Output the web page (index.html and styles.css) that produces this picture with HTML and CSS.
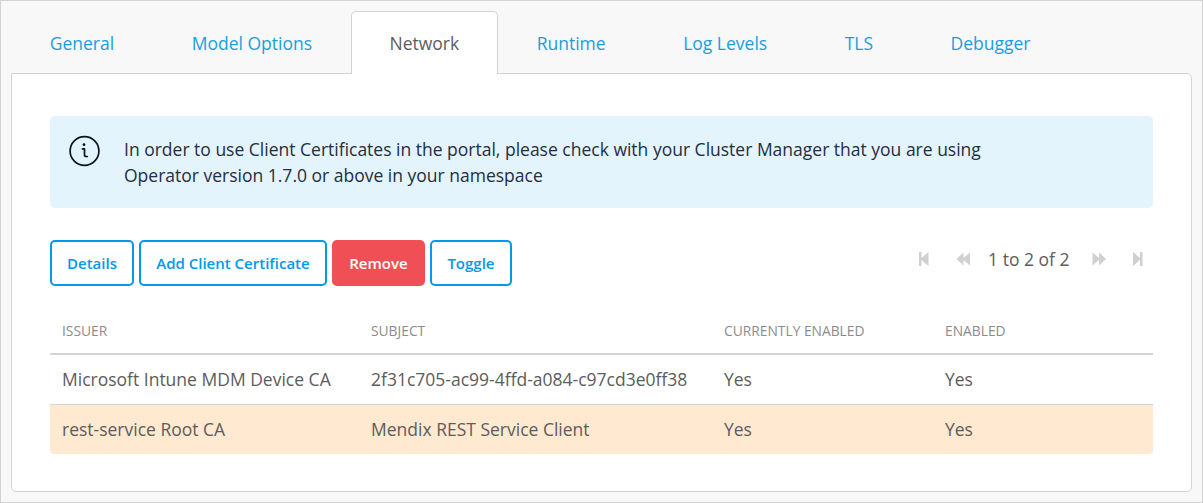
FILE: index.html
```html
<!DOCTYPE html>
<html lang="en">
<head>
<meta charset="utf-8">
<title>Environment Details - Network</title>
<link rel="stylesheet" href="styles.css">
</head>
<body>
<div class="page">
  <nav class="tabs">
    <a class="tab">General</a>
    <a class="tab">Model Options</a>
    <a class="tab active">Network</a>
    <a class="tab">Runtime</a>
    <a class="tab">Log Levels</a>
    <a class="tab">TLS</a>
    <a class="tab">Debugger</a>
  </nav>
  <main class="panel">
    <div class="notice">
      <svg class="info" viewBox="0 0 32 32" fill="none" stroke="#0a1326" stroke-width="1.7" stroke-linecap="round" stroke-linejoin="round">
        <circle cx="16.500" cy="16" r="14.400"/>
        <path d="M14.500 13.900h2v5.800q0 1.800 1.700 1.800h1.100"/>
        <circle cx="16" cy="9.700" r="1.400" fill="#0a1326" stroke="none"/>
      </svg>
      <p class="message">In order to use Client Certificates in the portal, please check with your Cluster Manager that you are using<br>Operator version 1.7.0 or above in your namespace</p>
    </div>
    <div class="toolbar">
      <div class="buttons">
        <button class="btn">Details</button>
        <button class="btn wide">Add Client Certificate</button>
        <button class="btn danger">Remove</button>
        <button class="btn toggle">Toggle</button>
      </div>
      <div class="pager">
        <svg class="step first" viewBox="0 0 10 14"><path d="M0 0h2.500v6l7-6v14l-7-6v6H0z"/></svg>
        <svg class="jump prev" viewBox="0 0 14 14"><path d="M.5 7l7-6.500V6L14 .5v13L7.500 8v5.500z"/></svg>
        <span class="count">1 to 2 of 2</span>
        <svg class="jump next" viewBox="0 0 14 14"><path d="M14 7L7 .5V6L.5 .5v13L7 8v5.500z"/></svg>
        <svg class="step last" viewBox="0 0 10 14"><path d="M9.500 0H7v6L0 0v14l7-6v6h2.500z"/></svg>
      </div>
    </div>
    <table class="grid">
      <colgroup><col class="c1"><col class="c2"><col class="c3"><col class="c4"></colgroup>
      <thead><tr><th>ISSUER</th><th>SUBJECT</th><th>CURRENTLY ENABLED</th><th>ENABLED</th></tr></thead>
      <tbody>
        <tr><td>Microsoft Intune MDM Device CA</td><td>2f31c705-ac99-4ffd-a084-c97cd3e0ff38</td><td>Yes</td><td>Yes</td></tr>
        <tr class="selected"><td>rest-service Root CA</td><td>Mendix REST Service Client</td><td>Yes</td><td>Yes</td></tr>
      </tbody>
    </table>
  </main>
</div>
</body>
</html>
```
FILE: styles.css
```css
* { box-sizing: border-box; }
body { margin: 0; font-family: "Open Sans", sans-serif; font-size: 17.5px; color: #5c5c5c; }
.page { width: 1203px; height: 503px; padding: 10px; border: 1px solid #d3d3d3; background: #f8f8f8; display: flex; flex-direction: column; }
.tabs { display: flex; height: 63px; margin-bottom: -1px; flex: none; position: relative; }
.tab { height: 63px; padding: 0 37.750px; border: 1px solid transparent; border-bottom: 0; line-height: 62px; color: #1a9edf; white-space: nowrap; }
.tab.active { background: #fff; border-color: #d3d3d3; border-radius: 5px 5px 0 0; color: #5c5c5c; }
.panel { height: 419px; width: 1181px; padding: 42px 38px 0; background: #fff; border: 1px solid #d3d3d3; border-radius: 0 5px 5px 5px; }
.notice { display: flex; height: 92px; padding: 19px 18px; gap: 24px; background: #e3f4fd; border-radius: 5px; color: #252e40; }
.info { width: 32px; height: 32px; flex: none; }
.message { margin: 1px 0 0; line-height: 26px; white-space: nowrap; }
.toolbar { display: flex; justify-content: space-between; margin-top: 32px; height: 46px; }
.buttons { display: flex; gap: 5px; }
.btn { height: 46px; padding: 0 15px; border: 2px solid #0099eb; border-radius: 5px; background: #fff; color: #0099eb; font: 600 15px "Open Sans", sans-serif; white-space: nowrap; }
.btn.wide { width: 188px; }
.btn.danger { width: 93px; background: #f04f55; border-color: #f04f55; color: #fff; }
.btn.toggle { width: 82px; }
.pager { display: flex; align-items: center; height: 38px; padding-right: 10px; }
.pager svg { fill: #d0d0d0; flex: none; }
.step { width: 10px; height: 14px; }
.jump { width: 14px; height: 14px; }
.prev { margin-left: 26.500px; margin-right: 18.500px; }
.next { margin-left: 22.500px; margin-right: 27px; }
.count { white-space: nowrap; }
.grid { width: 1103px; margin-top: 22px; table-layout: fixed; border-collapse: separate; border-spacing: 0; }
.c1 { width: 309px; }
.c2 { width: 353px; }
.c3 { width: 221px; }
th { height: 47px; padding: 0 0 0 12px; text-align: left; font-size: 13.800px; font-weight: 400; color: #8c8c8c; border-bottom: 2px solid #d3d3d3; }
td { height: 50px; padding: 0 0 2px 12px; border-bottom: 1px solid #d3d3d3; white-space: nowrap; }
.selected td { height: 49px; background: #ffe9d1; border-bottom: 0; }
.selected td:first-child { border-bottom-left-radius: 4px; }
.selected td:last-child { border-bottom-right-radius: 4px; }
```
